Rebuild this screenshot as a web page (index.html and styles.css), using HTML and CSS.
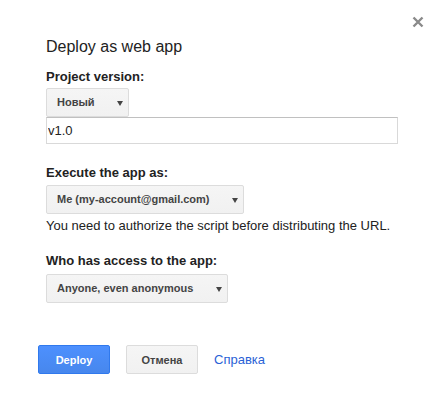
FILE: index.html
```html
<!DOCTYPE html>
<html lang="en">
<head>
    <meta charset="UTF-8">
    <meta name="viewport" content="width=device-width, initial-scale=1.0">
    <title>Deploy as web app</title>
    <link rel="stylesheet" href="styles.css">
</head>
<body>
    <div class="dialog">
        <span class="close" title="Close">
            <svg width="12" height="12" viewBox="0 0 12 12"><path d="M1.5 1.5L10.5 10.5M10.5 1.5L1.5 10.5" stroke="#8a8a8a" stroke-width="2.4" stroke-linecap="butt"/></svg>
        </span>

        <div class="content">
            <h1 class="title">Deploy as web app</h1>

            <div class="label first">Project version:</div>
            <div class="select version">Новый<span class="arrow"></span></div>
            <input class="text-input" type="text" value="v1.0">

            <div class="label execute">Execute the app as:</div>
            <div class="select account">Me (my-account@gmail.com)<span class="arrow"></span></div>
            <p class="note">You need to authorize the script before distributing the URL.</p>

            <div class="label access">Who has access to the app:</div>
            <div class="select anyone">Anyone, even anonymous<span class="arrow"></span></div>
        </div>

        <div class="buttons">
            <button class="btn btn-primary" type="button">Deploy</button>
            <button class="btn" type="button">Отмена</button>
            <a class="help" href="#">Справка</a>
        </div>
    </div>
</body>
</html>
```

FILE: styles.css
```css
body {
    margin: 0;
    font-family: "Liberation Sans", Arial, sans-serif;
    background-color: #fff;
    color: #222;
}
.dialog {
    position: relative;
    width: 440px;
    height: 393px;
}
.close {
    position: absolute;
    top: 16px;
    left: 412px;
    width: 12px;
    height: 12px;
}
.close svg {
    display: block;
}
.content {
    padding: 37px 0 0 46px;
}
.title {
    margin: 0;
    font-size: 16px;
    font-weight: normal;
    line-height: 20px;
}
.label {
    font-size: 13px;
    font-weight: bold;
    line-height: 16px;
}
.label.first {
    margin-top: 12px;
}
.label.execute {
    margin-top: 21px;
}
.label.access {
    margin-top: 19px;
}
.select {
    position: relative;
    box-sizing: border-box;
    height: 29px;
    margin-top: 3px;
    padding-left: 10px;
    border: 1px solid #dcdcdc;
    border-radius: 2px;
    background: linear-gradient(#f5f5f5, #f1f1f1);
    color: #444;
    font-size: 11px;
    font-weight: bold;
    line-height: 27px;
}
.arrow {
    position: absolute;
    top: 12px;
    right: 5px;
    width: 0;
    height: 0;
    border-left: 3px solid transparent;
    border-right: 3px solid transparent;
    border-top: 5px solid #444;
}
.version {
    width: 83px;
}
.account {
    width: 198px;
    margin-top: 4px;
}
.anyone {
    width: 182px;
    margin-top: 5px;
}
.text-input {
    display: block;
    box-sizing: border-box;
    width: 352px;
    height: 27px;
    margin: 0;
    padding: 0 0 0 1px;
    border: 1px solid #d9d9d9;
    border-top-color: #c0c0c0;
    font-family: "Liberation Sans", Arial, sans-serif;
    font-size: 13px;
    color: #222;
}
.note {
    margin: 4px 0 0;
    font-size: 13px;
    line-height: 16px;
}
.buttons {
    display: flex;
    align-items: center;
    gap: 16px;
    padding: 42px 0 0 38px;
}
.btn {
    box-sizing: border-box;
    width: 72px;
    height: 29px;
    padding: 0;
    border: 1px solid #dcdcdc;
    border-radius: 2px;
    background: linear-gradient(#f5f5f5, #f1f1f1);
    color: #444;
    font-family: "Liberation Sans", Arial, sans-serif;
    font-size: 11px;
    font-weight: bold;
    cursor: pointer;
}
.btn-primary {
    border-color: #3079ed;
    background: linear-gradient(#4d90fe, #4787ed);
    color: #fff;
}
.help {
    font-size: 13px;
    color: #2a62d6;
    text-decoration: none;
}
```
